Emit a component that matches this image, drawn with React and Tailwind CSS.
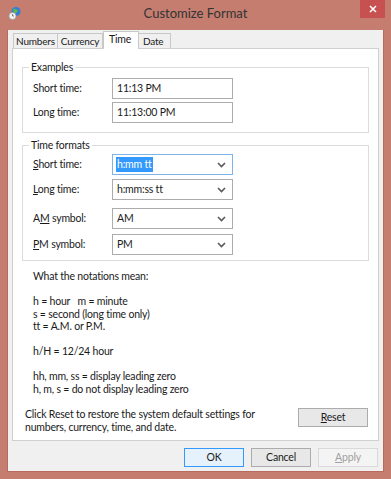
import React from 'react';

const font = { fontFamily: 'Lato, "Noto Sans", sans-serif' };

function Chevron() {
  return (
    <svg width="9" height="6" viewBox="0 0 9 6" className="shrink-0">
      <path d="M1 1 L4.5 4.5 L8 1" fill="none" stroke="#5a5a5a" strokeWidth="1.6" />
    </svg>
  );
}

function Combo({ value, focused }) {
  return (
    <div
      className={`w-[121px] h-[21px] bg-white border flex items-center justify-between pl-[3px] pr-[6px] ${
        focused ? 'border-[#7eb4ea]' : 'border-[#acacac]'
      }`}
    >
      {focused ? (
        <span className="bg-[#3399ff] text-white leading-[15px] px-px">{value}</span>
      ) : (
        <span className="px-px">{value}</span>
      )}
      <Chevron />
    </div>
  );
}

function Field({ value }) {
  return (
    <div className="w-[121px] h-[21px] bg-white border border-[#acacac] flex items-center pl-[4px]">
      {value}
    </div>
  );
}

function Row({ label, children, className = '' }) {
  return (
    <div className={`flex items-center pl-[10px] ${className}`}>
      <div className="w-[79px]">{label}</div>
      {children}
    </div>
  );
}

function Group({ title, children, className = '' }) {
  return (
    <div className={`relative border border-[#dcdcdc] mx-[9px] ${className}`}>
      <span className="absolute -top-[8px] left-[6px] bg-white px-[2px] leading-[14px]">{title}</span>
      {children}
    </div>
  );
}

function Button({ children, primary, disabled }) {
  return (
    <div
      className={`w-[60px] h-[19px] flex items-center justify-center border ${
        primary
          ? 'border-[#3399ff] bg-[#e5f1fb]'
          : disabled
          ? 'border-[#d9d9d9] bg-[#f4f4f4] text-[#a0a0a0]'
          : 'border-[#acacac] bg-[#e8e8e8]'
      }`}
    >
      {children}
    </div>
  );
}

export default function App() {
  return (
    <div
      className="w-[391px] h-[479px] bg-[#c47d6f] flex flex-col text-[10.5px] tracking-[-0.2px] text-[#1a1a1a]"
      style={font}
    >
      {/* Title bar */}
      <div className="h-[30px] flex items-start relative shrink-0">
        <svg width="14" height="14" viewBox="0 0 14 14" className="absolute left-[8px] top-[6px]">
          <circle cx="8" cy="5.5" r="4.5" fill="#2f7fd8" />
          <path d="M5 3 Q8 2 10 5 Q8 8 6 7 Z" fill="#5cb84a" />
          <circle cx="4.5" cy="10" r="3.6" fill="#f2f2f2" stroke="#9a9a9a" strokeWidth="0.8" />
          <path d="M4.5 8 V10 H6" fill="none" stroke="#555" strokeWidth="0.7" />
        </svg>
        <div className="flex-1 text-center text-[13px] tracking-normal leading-[27px] text-[#333333]">Customize Format</div>
        <div className="absolute right-[6px] top-0 w-[25px] h-[18px] bg-[#c75050] flex items-center justify-center">
          <svg width="8" height="8" viewBox="0 0 8 8">
            <path d="M1 1 L7 7 M7 1 L1 7" stroke="#fff" strokeWidth="1.5" />
          </svg>
        </div>
      </div>

      {/* Client area */}
      <div className="mx-[7px] mb-[7px] flex-1 bg-[#f0f0f0] flex flex-col border-l border-r border-b border-[#b86a5d]">
        {/* Tabs */}
        <div className="flex items-end pl-[5px] h-[18px] relative z-10 text-[10px]">
          <div className="h-[15px] w-[45px] border border-b-0 border-[#c8c8c8] bg-[#f0f0f0] flex items-center justify-center">Numbers</div>
          <div className="h-[15px] w-[45px] border border-b-0 border-l-0 border-[#c8c8c8] bg-[#f0f0f0] flex items-center justify-center">Currency</div>
          <div className="h-[18px] w-[36px] pl-[5px] border border-b-0 border-[#c8c8c8] bg-white flex items-start -mb-px text-[10.5px]">Time</div>
          <div className="h-[15px] w-[32px] pl-[4px] border border-b-0 border-l-0 border-[#c8c8c8] bg-[#f0f0f0] flex items-center">Date</div>
        </div>

        {/* Tab panel */}
        <div className="mx-[4px] h-[393px] bg-white border border-[#d0d0d0] flex flex-col pt-[18px]">
          <Group title="Examples" className="h-[66px] pt-[10px]">
            <Row label="Short time:">
              <Field value="11:13 PM" />
            </Row>
            <Row label="Long time:" className="mt-[3px]">
              <Field value="11:13:00 PM" />
            </Row>
          </Group>

          <Group title="Time formats" className="h-[116px] mt-[12px] pt-[8px]">
            <Row label={<span><u>S</u>hort time:</span>}>
              <Combo value="h:mm tt" focused />
            </Row>
            <Row label={<span><u>L</u>ong time:</span>} className="mt-[4px]">
              <Combo value="h:mm:ss tt" />
            </Row>
            <Row label={<span>A<u>M</u> symbol:</span>} className="mt-[8px]">
              <Combo value="AM" />
            </Row>
            <Row label={<span><u>P</u>M symbol:</span>} className="mt-[5px]">
              <Combo value="PM" />
            </Row>
          </Group>

          <div className="pl-[20px] mt-[9px] leading-[12.5px]">
            <p>What the notations mean:</p>
            <p className="mt-[12.5px]">h = hour&nbsp;&nbsp; m = minute</p>
            <p>s = second (long time only)</p>
            <p>tt = A.M. or P.M.</p>
            <p className="mt-[12.5px]">h/H = 12/24 hour</p>
            <p className="mt-[12.5px]">hh, mm, ss = display leading zero</p>
            <p>h, m, s = do not display leading zero</p>
          </div>

          <div className="mt-auto mb-[6px] flex items-start justify-between pl-[12px] pr-[10px]">
            <p className="leading-[13px] mt-[1px]">
              Click Reset to restore the system default settings for
              <br />
              numbers, currency, time, and date.
            </p>
            <div className="w-[70px] h-[19px] mt-[1px] border border-[#acacac] bg-[#e8e8e8] flex items-center justify-center">
              <span><u>R</u>eset</span>
            </div>
          </div>
        </div>

        {/* Bottom buttons */}
        <div className="flex justify-end gap-[7px] pr-[5px] mt-[7px]">
          <Button primary>OK</Button>
          <Button>Cancel</Button>
          <Button disabled><u>A</u>pply</Button>
        </div>
      </div>
    </div>
  );
}
